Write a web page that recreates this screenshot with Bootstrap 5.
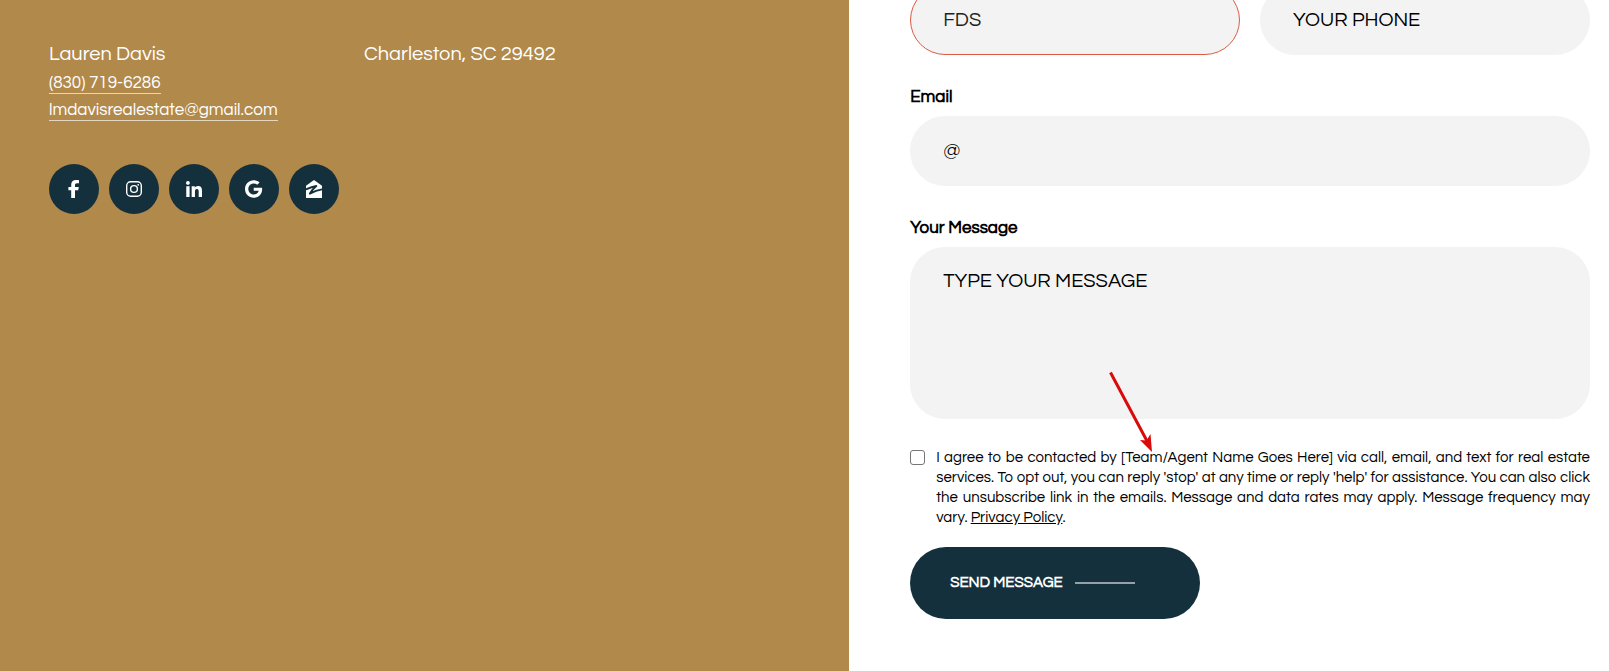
<!DOCTYPE html>
<html lang="en">
<head>
<meta charset="utf-8">
<meta name="viewport" content="width=device-width, initial-scale=1">
<title>Contact Lauren Davis</title>
<link href="https://cdn.jsdelivr.net/npm/bootstrap@5.3.0/dist/css/bootstrap.min.css" rel="stylesheet">
<style>
  :root { --gold: #b1894b; --navy: #14303d; --field: #f3f3f3; }
  body { font-family: Questrial, Inter, "Liberation Sans", sans-serif; color: #000; background: #fff; }
  .contact-page { display: grid; grid-template-columns: 19fr 17fr; min-height: 100vh; overflow: hidden; }
  .agent-panel { background: var(--gold); color: #fff; padding: 40px 49px; font-size: 20px; line-height: 28px; }
  .agent-details { display: grid; grid-template-columns: 235px 1fr; column-gap: 80px; }
  .agent-link { color: #fff; font-size: 17px; line-height: 20px; padding-top: 2px; border-bottom: 1px solid rgba(255,255,255,.65); margin-bottom: 4px; white-space: nowrap; }
  .agent-name { margin-bottom: 3px; }
  .agent-link:hover { color: #fff; }
  .social-row { margin-top: 39px; gap: 10px; }
  .social-btn { width: 50px; height: 50px; background: var(--navy); color: #fff; }
  .form-panel { padding: 0 19px 52px 61px; }
  .name-row { margin-top: -15px; display: grid; grid-template-columns: 1fr 1fr; gap: 20px; }
  .pill-field, .pill-field:focus { background: var(--field); border: 1px solid var(--field); border-radius: 35px; color: #000; font-size: 20px; line-height: 28px; padding: 19px 32px; }
  .pill-field::placeholder { color: #000; opacity: 1; }
  .pill-input { height: 70px; }
  .pill-input, .pill-input:focus { padding: 18px 32px; }
  .pill-field.has-error { border-color: #dd5a45; color: #222; }
  .field-group { margin-top: 32px; }
  .field-label { display: block; font-size: 17px; font-weight: 700; line-height: 20px; margin-bottom: 9px; }
  .message-field { height: 172px; resize: none; display: block; }
  .consent { margin-top: 29px; gap: 11px; font-size: 15px; line-height: 20px; }
  .consent .form-check-input { width: 15px; height: 15px; margin: 2px 0 0; border: 1px solid #767676; border-radius: 3px; flex: none; }
  .consent-text { text-align: justify; }
  .send-btn { margin-top: 19px; width: 290px; max-width: 100%; height: 72px; border-radius: 36px; background: var(--navy); color: #fff; font-size: 15px; font-weight: 700; padding: 0 40px; gap: 12px; }
  .send-btn:hover { background: var(--navy); color: #fff; }
  .send-line { width: 60px; height: 2px; background: rgba(255,255,255,.55); }
  .pointer-arrow { left: 196px; top: 122px; pointer-events: none; }
  @media (max-width: 900px) { .contact-page { grid-template-columns: 1fr; } .name-row { margin-top: 20px; } .form-panel { padding-left: 19px; } }
</style>
</head>
<body>
<main class="contact-page">
  <section class="agent-panel">
    <div class="agent-details">
      <div class="d-flex flex-column align-items-start">
        <div class="agent-name">Lauren Davis</div>
        <a class="agent-link text-decoration-none" href="tel:8307196286">(830) 719-6286</a>
        <a class="agent-link text-decoration-none" href="mailto:lmdavisrealestate@gmail.com">lmdavisrealestate@gmail.com</a>
      </div>
      <div>Charleston, SC 29492</div>
    </div>
    <nav class="social-row d-flex flex-wrap" aria-label="Social links">
      <a class="social-btn rounded-circle d-flex align-items-center justify-content-center" href="#" aria-label="Facebook">
        <svg width="12" height="18" viewBox="0 0 12 18" fill="currentColor"><path d="M3.200 18V10.300H.4V6.900h2.800V4.800C3.200 1.500 4.900 0 8.100 0c1.400 0 2.400.1 2.900.2v3.100H9.100C7.500 3.300 7 4 7 5.300v1.600h3.800l-.6 3.400H7V18z"/></svg>
      </a>
      <a class="social-btn rounded-circle d-flex align-items-center justify-content-center" href="#" aria-label="Instagram">
        <svg width="16" height="16" viewBox="0 0 16 16" fill="none" stroke="currentColor" stroke-width="1.400"><rect x=".7" y=".7" width="14.600" height="14.600" rx="4"/><circle cx="8" cy="8" r="3.400"/><circle cx="12.200" cy="3.800" r=".9" fill="currentColor" stroke="none"/></svg>
      </a>
      <a class="social-btn rounded-circle d-flex align-items-center justify-content-center" href="#" aria-label="LinkedIn">
        <svg width="16" height="16" viewBox="0 0 448 448" fill="currentColor"><path d="M100.300 448H7.400V148.900h92.900zM53.800 108.100C24.100 108.100 0 83.500 0 53.800a53.800 53.800 0 0 1 107.600 0c0 29.700-24.100 54.300-53.800 54.300zM447.900 448h-92.700V302.400c0-34.700-.7-79.200-48.300-79.200-48.300 0-55.700 37.700-55.700 76.700V448h-92.800V148.900h89.100v40.800h1.300c12.400-23.500 42.700-48.300 87.900-48.300 94 0 111.300 61.900 111.300 142.300V448z"/></svg>
      </a>
      <a class="social-btn rounded-circle d-flex align-items-center justify-content-center" href="#" aria-label="Google">
        <svg width="18" height="18" viewBox="0 0 512 512" fill="currentColor"><path d="M488 261.800C488 403.300 391.100 504 248 504 110.800 504 0 393.200 0 256S110.800 8 248 8c66.800 0 123 24.500 166.300 64.900l-67.500 64.900C258.500 52.600 94.300 116.600 94.300 256c0 86.500 69.100 156.600 153.700 156.600 98.200 0 135-70.400 140.800-106.900H248v-85.300h236.100c2.300 12.700 3.900 24.900 3.900 41.400z"/></svg>
      </a>
      <a class="social-btn rounded-circle d-flex align-items-center justify-content-center" href="#" aria-label="Zillow">
        <svg width="16" height="18" viewBox="0 0 16 18" fill="currentColor"><path d="M8 0 16 5.800V18H0V5.800z"/><path d="M0 9.400C3.500 7.700 6.800 6.500 10.300 6 7.800 8 5.600 10.800 3.900 13.600 7.500 11.600 11.500 10 16 9.400" stroke="#14303d" stroke-width="1.900" stroke-linejoin="round" fill="none"/></svg>
      </a>
    </nav>
  </section>

  <section class="form-panel">
    <form onsubmit="return false">
      <div class="name-row">
        <input class="form-control pill-field pill-input has-error" type="text" value="FDS" aria-label="Your name">
        <input class="form-control pill-field pill-input" type="tel" placeholder="YOUR PHONE" aria-label="Your phone">
      </div>
      <div class="field-group">
        <label class="field-label" for="email">Email</label>
        <input class="form-control pill-field pill-input" id="email" type="email" placeholder="@">
      </div>
      <div class="field-group">
        <label class="field-label" for="message">Your Message</label>
        <div class="position-relative">
          <textarea class="form-control pill-field message-field" id="message" placeholder="TYPE YOUR MESSAGE"></textarea>
          <svg class="pointer-arrow position-absolute" width="52" height="86" viewBox="0 0 52 86" aria-hidden="true"><path d="M4.500 3.500 41 72" stroke="#d90a0a" stroke-width="3"/><path d="M46 83 34 71 40.500 71.500 44.500 65z" fill="#d90a0a"/></svg>
        </div>
      </div>
      <div class="consent d-flex align-items-start">
        <input class="form-check-input" type="checkbox" id="agree">
        <label class="consent-text" for="agree">I agree to be contacted by [Team/Agent Name Goes Here] via call, email, and text for real estate services. To opt out, you can reply 'stop' at any time or reply 'help' for assistance. You can also click the unsubscribe link in the emails. Message and data rates may apply. Message frequency may vary. <a class="text-black" href="#">Privacy Policy</a>.</label>
      </div>
      <button class="send-btn btn border-0 d-flex align-items-center" type="submit"><span class="text-nowrap">SEND MESSAGE</span><span class="send-line"></span></button>
    </form>
  </section>
</main>
<script src="https://cdn.jsdelivr.net/npm/bootstrap@5.3.0/dist/js/bootstrap.bundle.min.js"></script>
</body>
</html>
